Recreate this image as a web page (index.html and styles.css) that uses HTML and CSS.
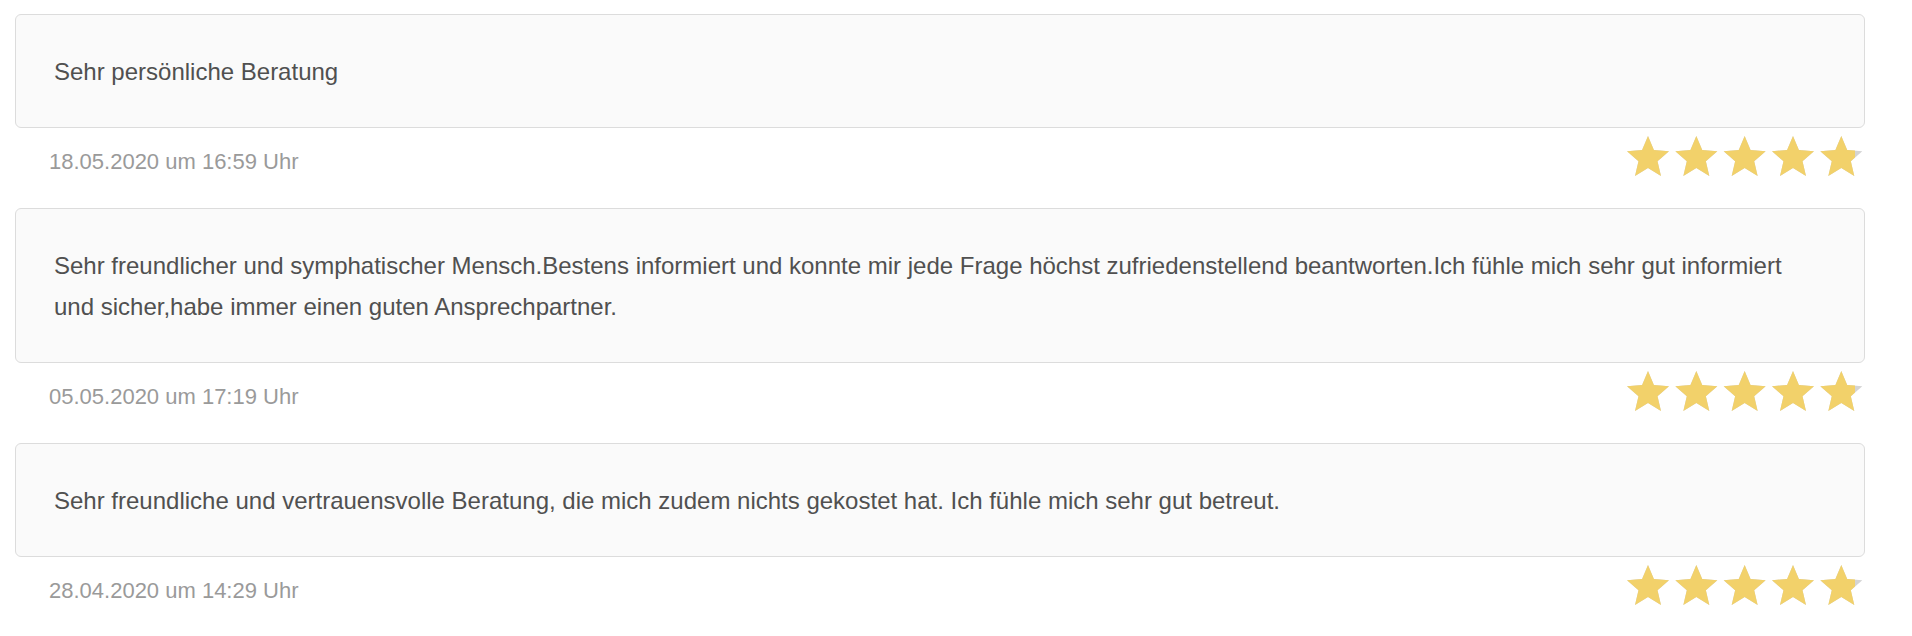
FILE: index.html
```html
<!DOCTYPE html>
<html lang="de">
<head>
<meta charset="utf-8">
<title>Bewertungen</title>
<link rel="stylesheet" href="styles.css">
</head>
<body>
<div class="reviews">
  <div class="review">
    <div class="review-card">
      <p class="review-text">Sehr persönliche Beratung</p>
    </div>
    <div class="review-meta">
      <span class="review-date">18.05.2020 um 16:59 Uhr</span>
      <div class="rating">
        <svg class="stars stars-bg" viewBox="0 0 236 40" width="236" height="40"><g><path transform="translate(-4.2 -4.2) scale(2.1)" d="M12 17.27L18.18 21l-1.64-7.03L22 9.24l-7.19-.61L12 2 9.19 8.63 2 9.24l5.46 4.73L5.82 21z"/><path transform="translate(44.13 -4.2) scale(2.1)" d="M12 17.27L18.18 21l-1.64-7.03L22 9.24l-7.19-.61L12 2 9.19 8.63 2 9.24l5.46 4.73L5.82 21z"/><path transform="translate(92.46 -4.2) scale(2.1)" d="M12 17.27L18.18 21l-1.64-7.03L22 9.24l-7.19-.61L12 2 9.19 8.63 2 9.24l5.46 4.73L5.82 21z"/><path transform="translate(140.8 -4.2) scale(2.1)" d="M12 17.27L18.18 21l-1.64-7.03L22 9.24l-7.19-.61L12 2 9.19 8.63 2 9.24l5.46 4.73L5.82 21z"/><path transform="translate(189.1 -4.2) scale(2.1)" d="M12 17.27L18.18 21l-1.64-7.03L22 9.24l-7.19-.61L12 2 9.19 8.63 2 9.24l5.46 4.73L5.82 21z"/></g></svg>
        <div class="stars-fill" style="width: 96.5%">
          <svg class="stars stars-gold" viewBox="0 0 236 40" width="236" height="40"><g><path transform="translate(-4.2 -4.2) scale(2.1)" d="M12 17.27L18.18 21l-1.64-7.03L22 9.24l-7.19-.61L12 2 9.19 8.63 2 9.24l5.46 4.73L5.82 21z"/><path transform="translate(44.13 -4.2) scale(2.1)" d="M12 17.27L18.18 21l-1.64-7.03L22 9.24l-7.19-.61L12 2 9.19 8.63 2 9.24l5.46 4.73L5.82 21z"/><path transform="translate(92.46 -4.2) scale(2.1)" d="M12 17.27L18.18 21l-1.64-7.03L22 9.24l-7.19-.61L12 2 9.19 8.63 2 9.24l5.46 4.73L5.82 21z"/><path transform="translate(140.8 -4.2) scale(2.1)" d="M12 17.27L18.18 21l-1.64-7.03L22 9.24l-7.19-.61L12 2 9.19 8.63 2 9.24l5.46 4.73L5.82 21z"/><path transform="translate(189.1 -4.2) scale(2.1)" d="M12 17.27L18.18 21l-1.64-7.03L22 9.24l-7.19-.61L12 2 9.19 8.63 2 9.24l5.46 4.73L5.82 21z"/></g></svg>
        </div>
      </div>
    </div>
  </div>

  <div class="review">
    <div class="review-card">
      <p class="review-text">Sehr freundlicher und symphatischer Mensch.Bestens informiert und konnte mir jede Frage höchst zufriedenstellend beantworten.Ich fühle mich sehr gut informiert und sicher,habe immer einen guten Ansprechpartner.</p>
    </div>
    <div class="review-meta">
      <span class="review-date">05.05.2020 um 17:19 Uhr</span>
      <div class="rating">
        <svg class="stars stars-bg" viewBox="0 0 236 40" width="236" height="40"><g><path transform="translate(-4.2 -4.2) scale(2.1)" d="M12 17.27L18.18 21l-1.64-7.03L22 9.24l-7.19-.61L12 2 9.19 8.63 2 9.24l5.46 4.73L5.82 21z"/><path transform="translate(44.13 -4.2) scale(2.1)" d="M12 17.27L18.18 21l-1.64-7.03L22 9.24l-7.19-.61L12 2 9.19 8.63 2 9.24l5.46 4.73L5.82 21z"/><path transform="translate(92.46 -4.2) scale(2.1)" d="M12 17.27L18.18 21l-1.64-7.03L22 9.24l-7.19-.61L12 2 9.19 8.63 2 9.24l5.46 4.73L5.82 21z"/><path transform="translate(140.8 -4.2) scale(2.1)" d="M12 17.27L18.18 21l-1.64-7.03L22 9.24l-7.19-.61L12 2 9.19 8.63 2 9.24l5.46 4.73L5.82 21z"/><path transform="translate(189.1 -4.2) scale(2.1)" d="M12 17.27L18.18 21l-1.64-7.03L22 9.24l-7.19-.61L12 2 9.19 8.63 2 9.24l5.46 4.73L5.82 21z"/></g></svg>
        <div class="stars-fill" style="width: 96.5%">
          <svg class="stars stars-gold" viewBox="0 0 236 40" width="236" height="40"><g><path transform="translate(-4.2 -4.2) scale(2.1)" d="M12 17.27L18.18 21l-1.64-7.03L22 9.24l-7.19-.61L12 2 9.19 8.63 2 9.24l5.46 4.73L5.82 21z"/><path transform="translate(44.13 -4.2) scale(2.1)" d="M12 17.27L18.18 21l-1.64-7.03L22 9.24l-7.19-.61L12 2 9.19 8.63 2 9.24l5.46 4.73L5.82 21z"/><path transform="translate(92.46 -4.2) scale(2.1)" d="M12 17.27L18.18 21l-1.64-7.03L22 9.24l-7.19-.61L12 2 9.19 8.63 2 9.24l5.46 4.73L5.82 21z"/><path transform="translate(140.8 -4.2) scale(2.1)" d="M12 17.27L18.18 21l-1.64-7.03L22 9.24l-7.19-.61L12 2 9.19 8.63 2 9.24l5.46 4.73L5.82 21z"/><path transform="translate(189.1 -4.2) scale(2.1)" d="M12 17.27L18.18 21l-1.64-7.03L22 9.24l-7.19-.61L12 2 9.19 8.63 2 9.24l5.46 4.73L5.82 21z"/></g></svg>
        </div>
      </div>
    </div>
  </div>

  <div class="review">
    <div class="review-card">
      <p class="review-text">Sehr freundliche und vertrauensvolle Beratung, die mich zudem nichts gekostet hat. Ich fühle mich sehr gut betreut.</p>
    </div>
    <div class="review-meta">
      <span class="review-date">28.04.2020 um 14:29 Uhr</span>
      <div class="rating">
        <svg class="stars stars-bg" viewBox="0 0 236 40" width="236" height="40"><g><path transform="translate(-4.2 -4.2) scale(2.1)" d="M12 17.27L18.18 21l-1.64-7.03L22 9.24l-7.19-.61L12 2 9.19 8.63 2 9.24l5.46 4.73L5.82 21z"/><path transform="translate(44.13 -4.2) scale(2.1)" d="M12 17.27L18.18 21l-1.64-7.03L22 9.24l-7.19-.61L12 2 9.19 8.63 2 9.24l5.46 4.73L5.82 21z"/><path transform="translate(92.46 -4.2) scale(2.1)" d="M12 17.27L18.18 21l-1.64-7.03L22 9.24l-7.19-.61L12 2 9.19 8.63 2 9.24l5.46 4.73L5.82 21z"/><path transform="translate(140.8 -4.2) scale(2.1)" d="M12 17.27L18.18 21l-1.64-7.03L22 9.24l-7.19-.61L12 2 9.19 8.63 2 9.24l5.46 4.73L5.82 21z"/><path transform="translate(189.1 -4.2) scale(2.1)" d="M12 17.27L18.18 21l-1.64-7.03L22 9.24l-7.19-.61L12 2 9.19 8.63 2 9.24l5.46 4.73L5.82 21z"/></g></svg>
        <div class="stars-fill" style="width: 96.5%">
          <svg class="stars stars-gold" viewBox="0 0 236 40" width="236" height="40"><g><path transform="translate(-4.2 -4.2) scale(2.1)" d="M12 17.27L18.18 21l-1.64-7.03L22 9.24l-7.19-.61L12 2 9.19 8.63 2 9.24l5.46 4.73L5.82 21z"/><path transform="translate(44.13 -4.2) scale(2.1)" d="M12 17.27L18.18 21l-1.64-7.03L22 9.24l-7.19-.61L12 2 9.19 8.63 2 9.24l5.46 4.73L5.82 21z"/><path transform="translate(92.46 -4.2) scale(2.1)" d="M12 17.27L18.18 21l-1.64-7.03L22 9.24l-7.19-.61L12 2 9.19 8.63 2 9.24l5.46 4.73L5.82 21z"/><path transform="translate(140.8 -4.2) scale(2.1)" d="M12 17.27L18.18 21l-1.64-7.03L22 9.24l-7.19-.61L12 2 9.19 8.63 2 9.24l5.46 4.73L5.82 21z"/><path transform="translate(189.1 -4.2) scale(2.1)" d="M12 17.27L18.18 21l-1.64-7.03L22 9.24l-7.19-.61L12 2 9.19 8.63 2 9.24l5.46 4.73L5.82 21z"/></g></svg>
        </div>
      </div>
    </div>
  </div>
</div>
</body>
</html>
```

FILE: styles.css
```css
html, body {
  margin: 0;
  padding: 0;
  background: #ffffff;
}

body {
  font-family: "Liberation Sans", Arial, Helvetica, sans-serif;
  color: #505050;
}

.reviews {
  display: flex;
  flex-direction: column;
  padding: 14px 47px 0 15px;
}

.review {
  display: flex;
  flex-direction: column;
}

.review-card {
  background: #fafafa;
  border: 1px solid #dcdcdc;
  border-radius: 6px;
  padding: 36px 38px 35px 38px;
}

.review-text {
  margin: 0;
  font-size: 24px;
  line-height: 41px;
  color: #505050;
}

.review-meta {
  display: flex;
  justify-content: space-between;
  align-items: flex-start;
  height: 80px;
  padding-right: 2px;
}

.review-date {
  margin-top: 19px;
  padding-left: 34px;
  font-size: 22px;
  line-height: 30px;
  color: #9a9a9a;
}

.rating {
  position: relative;
  margin-top: 8px;
  width: 236px;
  height: 40px;
}

.stars {
  display: block;
  width: 236px;
  height: 40px;
}

.stars-bg {
  fill: #d4d4d4;
}

.stars-fill {
  position: absolute;
  top: 0;
  left: 0;
  height: 40px;
  overflow: hidden;
}

.stars-gold {
  fill: #f2d16a;
}
```
